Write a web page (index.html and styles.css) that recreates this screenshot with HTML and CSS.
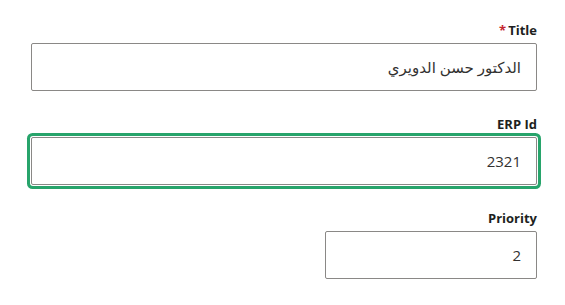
FILE: index.html
```html
<!DOCTYPE html>
<html lang="en">
<head>
    <meta charset="UTF-8">
    <meta name="viewport" content="width=device-width, initial-scale=1.0">
    <title>Item form</title>
    <link rel="stylesheet" href="styles.css">
</head>
<body>
    <form class="item-form" dir="rtl">
        <div class="field">
            <label class="field-label is-required" for="title">Title</label>
            <input id="title" class="field-input" type="text" value="الدكتور حسن الدويري">
        </div>

        <div class="field">
            <label class="field-label" for="erp">ERP Id</label>
            <input id="erp" class="field-input is-focused" type="text" value="2321">
        </div>

        <div class="field field-short">
            <label class="field-label" for="priority">Priority</label>
            <input id="priority" class="field-input" type="text" value="2">
        </div>
    </form>
</body>
</html>
```

FILE: styles.css
```css
body {
    margin: 0;
    background-color: #fff;
    font-family: 'Open Sans', 'DejaVu Sans', sans-serif;
    color: #323130;
}

.item-form {
    padding: 20px 28px 0 31px;
}

.field {
    display: flex;
    flex-direction: column;
    margin-bottom: 23px;
}

.field-label {
    font-size: 13px;
    font-weight: 700;
    line-height: 20px;
    margin-bottom: 3px;
    color: #201f1e;
}

.is-required::after {
    content: "*";
    color: #c4262e;
    margin-right: 2px;
}

.field-input {
    box-sizing: border-box;
    height: 48px;
    width: 100%;
    border: 1px solid #8a8886;
    border-radius: 2px;
    padding: 0 15px;
    font-family: 'Open Sans', 'DejaVu Sans', sans-serif;
    font-size: 15px;
    color: #323130;
    direction: rtl;
    outline: none;
    background-color: #fff;
}

.is-focused {
    box-shadow: 0 0 0 1px #fff, 0 0 0 4px #27a46b;
}

.field-short .field-input {
    width: 212px;
}
```
